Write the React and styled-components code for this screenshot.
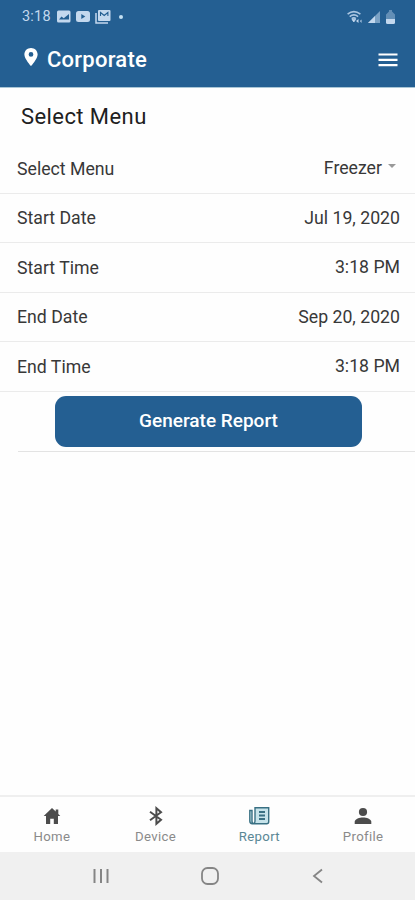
import React from 'react';
import styled, { createGlobalStyle } from 'styled-components';

const GlobalStyle = createGlobalStyle`
  * {
    box-sizing: border-box;
  }

  body {
    margin: 0;
    background: #fefefe;
    font-family: Roboto, 'Liberation Sans', sans-serif;
  }
`;

const Screen = styled.div`
  display: flex;
  flex-direction: column;
  width: 415px;
  height: 900px;
  background: #fefefe;
  overflow: hidden;
`;

const Header = styled.header`
  height: 88px;
  flex-shrink: 0;
  background: #245f92;
  border-bottom: 1px solid #a9c6d6;
  color: #fff;
`;

const StatusBar = styled.div`
  display: flex;
  align-items: center;
  justify-content: space-between;
  height: 32px;
  padding: 1px 20px 0 22px;
  color: #c3d8ee;
`;

const StatusGroup = styled.div`
  display: flex;
  align-items: center;
  gap: ${(props) => props.$gap}px;

  svg {
    display: block;
  }
`;

const Clock = styled.span`
  width: 30px;
  font-size: 14.5px;
  line-height: 16px;
  letter-spacing: 0.2px;
`;

const Dot = styled.span`
  width: 4px;
  height: 4px;
  margin-left: 3px;
  border-radius: 50%;
  background: #c3e0f2;
`;

const TitleBar = styled.div`
  display: flex;
  align-items: center;
  height: 55px;
  padding: 0 17px 0 24px;

  svg {
    display: block;
  }
`;

const Pin = styled.svg`
  margin-bottom: 5px;
`;

const Title = styled.h1`
  flex: 1;
  margin: 0 0 0 9px;
  font-size: 22px;
  font-weight: 500;
  line-height: 26px;
  letter-spacing: 0.25px;
`;

const Content = styled.main`
  flex: 1;
`;

const SectionTitle = styled.h2`
  height: 56px;
  margin: 0;
  padding-left: 21px;
  color: #202020;
  font-size: 22px;
  font-weight: 400;
  line-height: 57px;
  letter-spacing: 0.42px;
`;

const Row = styled.div`
  display: flex;
  align-items: center;
  justify-content: space-between;
  height: 49.5px;
  padding: 1px 15px 0 17px;
  border-bottom: 1.5px solid #ebebeb;
  color: #383838;
  font-size: 17.7px;
  line-height: 24px;
`;

const Value = styled.span`
  display: flex;
  align-items: center;
  margin-top: -1px;
`;

const Caret = styled.span`
  margin: -4px 4px 0 6px;
  border: 4px solid transparent;
  border-top-color: #999;
  border-bottom: 0;
`;

const ButtonRow = styled.div`
  display: flex;
  justify-content: center;
  height: 60px;
  margin-left: 18px;
  padding: 4px 16px 0 0;
  border-bottom: 1px solid #e3e3e3;
`;

const Button = styled.button`
  width: 307px;
  height: 51px;
  padding: 0 0 2px;
  border: none;
  border-radius: 11px;
  background: #245f92;
  color: #fff;
  font-family: inherit;
  font-size: 19px;
  font-weight: 500;
`;

const Tabs = styled.nav`
  display: grid;
  grid-template-columns: repeat(4, 1fr);
  height: 57px;
  border-top: 2px solid #efefef;
`;

const Tab = styled.div`
  display: flex;
  flex-direction: column;
  align-items: center;
  padding-top: 9px;
  color: ${(props) => (props.$active ? '#5a8795' : '#8a8a8a')};
  font-size: 13.2px;
  line-height: 16px;
  letter-spacing: 0.35px;

  svg {
    display: block;
    margin-bottom: 3px;
    color: ${(props) => (props.$active ? '#397083' : '#4c4c4c')};
  }
`;

const SystemBar = styled.div`
  display: flex;
  align-items: center;
  justify-content: space-between;
  height: 48px;
  padding: 0 88px 0 92px;
  background: #f0f0f0;
`;

const rows = [
  { label: 'Select Menu', value: 'Freezer', caret: true },
  { label: 'Start Date', value: 'Jul 19, 2020' },
  { label: 'Start Time', value: '3:18 PM' },
  { label: 'End Date', value: 'Sep 20, 2020' },
  { label: 'End Time', value: '3:18 PM' },
];

const HomeIcon = () => (
  <svg width="20" height="20" viewBox="0 0 20 20">
    <path fill="currentColor" d="M10 2 1.7 10H4v8h4.2v-5.3h3.6V18H16v-8h2.3l-2-2V3.5h-2.6v2z" />
  </svg>
);

const BluetoothIcon = () => (
  <svg width="20" height="20" viewBox="0 0 20 20" fill="none" stroke="currentColor" strokeWidth="2">
    <path d="m4 5.8 11 8-4.6 4V2.3l4.6 4-11 8" />
  </svg>
);

const ReportIcon = () => (
  <svg width="22" height="20" viewBox="0 0 22 20" stroke="currentColor" strokeWidth="1.4">
    <path fill="#c6e3ea" d="M4 4.5H1.8V15c0 1.7.9 2.7 2.5 2.7h14.4c1.3 0 2-.8 2-2V1.8H7V15c0 3.3-3 3.3-3 0z" />
    <path fill="none" strokeWidth="1.8" d="M11 6h6M11 9.5h6M11 13h6" />
  </svg>
);

const ProfileIcon = () => (
  <svg width="20" height="20" viewBox="0 0 20 20" fill="currentColor">
    <circle cx="10" cy="6" r="4.1" />
    <path d="M1.7 18v-2.2c0-2.8 5-4.3 8.3-4.3s8.3 1.5 8.3 4.3V18z" />
  </svg>
);

const tabs = [
  { name: 'Home', Icon: HomeIcon },
  { name: 'Device', Icon: BluetoothIcon },
  { name: 'Report', Icon: ReportIcon, active: true },
  { name: 'Profile', Icon: ProfileIcon },
];

function StatusIcons() {
  return (
    <StatusBar>
      <StatusGroup $gap={5}>
        <Clock>3:18</Clock>
        <svg width="14" height="13" viewBox="0 0 14 13">
          <rect width="13.5" height="12" y=".5" rx="1.5" fill="currentColor" />
          <path d="m2 9.5 2.5-3 2.2 1.8L12 4v5.5z" fill="#245f92" />
        </svg>
        <svg width="14" height="13" viewBox="0 0 14 13">
          <rect width="14" height="11" y="1" rx="2.5" fill="currentColor" />
          <path d="M5.3 4v5l4-2.5z" fill="#245f92" />
        </svg>
        <svg width="16" height="15" viewBox="0 0 16 15">
          <path d="M1 4v10h12" fill="none" stroke="currentColor" strokeWidth="1.5" />
          <rect x="3" y="1" width="12.5" height="11" rx="1" fill="currentColor" />
          <path d="M5.5 7V3.5l3.7 3 3.7-3V7" fill="none" stroke="#245f92" strokeWidth="1.1" />
        </svg>
        <Dot />
      </StatusGroup>
      <StatusGroup $gap={6}>
        <svg width="15" height="14" viewBox="0 0 15 14" fill="none" stroke="currentColor" strokeWidth="1.6">
          <path d="M.6 4.2q6.2-5.2 12.8 0M2.7 6.6q4.2-3.4 8.4 0M4.7 8.7q2.1-1.8 4.2 0" opacity=".85" />
          <path d="m6.8 12 1.8-2.6H5z" fill="currentColor" strokeWidth=".8" />
          <path d="m9 11 2.5-2v4zM14.5 9.5 13 11l1.5 2z" fill="currentColor" stroke="none" />
        </svg>
        <svg width="12" height="12" viewBox="0 0 12 12">
          <path d="M12 0v12H0z" fill="currentColor" opacity=".55" />
          <path d="M7 5v7H0z" fill="currentColor" />
        </svg>
        <svg width="9" height="14" viewBox="0 0 9 14" fill="currentColor">
          <path d="M3 0h3v1.5l3 3V9H0V4.5l3-3z" opacity=".4" />
          <path d="M0 9h9v3.5Q9 14 7.5 14h-6Q0 14 0 12.5z" />
        </svg>
      </StatusGroup>
    </StatusBar>
  );
}

export default function App() {
  return (
    <>
      <GlobalStyle />
      <Screen>
        <Header>
          <StatusIcons />
          <TitleBar>
            <Pin width="14" height="18" viewBox="0 0 14 19">
              <path
                fill="#fff"
                fillRule="evenodd"
                d="M7 0C3.1 0 0 3 0 6.8 0 11.5 7 19 7 19s7-7.5 7-12.2C14 3 10.9 0 7 0zm0 4.3a2.5 2.5 0 1 1 0 5 2.5 2.5 0 0 1 0-5z"
              />
            </Pin>
            <Title>Corporate</Title>
            <svg width="20" height="14" viewBox="0 0 20 14">
              <path d="M.5 1.5h19M.5 6.8h19M.5 12.1h19" stroke="#fff" strokeWidth="2.2" />
            </svg>
          </TitleBar>
        </Header>
        <Content>
          <SectionTitle>Select Menu</SectionTitle>
          {rows.map((row) => (
            <Row key={row.label}>
              <span>{row.label}</span>
              <Value>
                {row.value}
                {row.caret && <Caret />}
              </Value>
            </Row>
          ))}
          <ButtonRow>
            <Button>Generate Report</Button>
          </ButtonRow>
        </Content>
        <Tabs>
          {tabs.map(({ name, Icon, active }) => (
            <Tab key={name} $active={active}>
              <Icon />
              {name}
            </Tab>
          ))}
        </Tabs>
        <SystemBar>
          <svg width="18" height="16" viewBox="0 0 18 16" stroke="#858585" strokeWidth="2">
            <path d="M2.5 1v14M9 1v14M15.5 1v14" />
          </svg>
          <svg width="18" height="18" viewBox="0 0 18 18" fill="none" stroke="#858585" strokeWidth="1.8">
            <rect x="1" y="1" width="16" height="16" rx="5.5" />
          </svg>
          <svg width="18" height="18" viewBox="0 0 18 18" fill="none" stroke="#858585" strokeWidth="1.8">
            <path d="M13 2.5 5 9l8 6.5" />
          </svg>
        </SystemBar>
      </Screen>
    </>
  );
}
